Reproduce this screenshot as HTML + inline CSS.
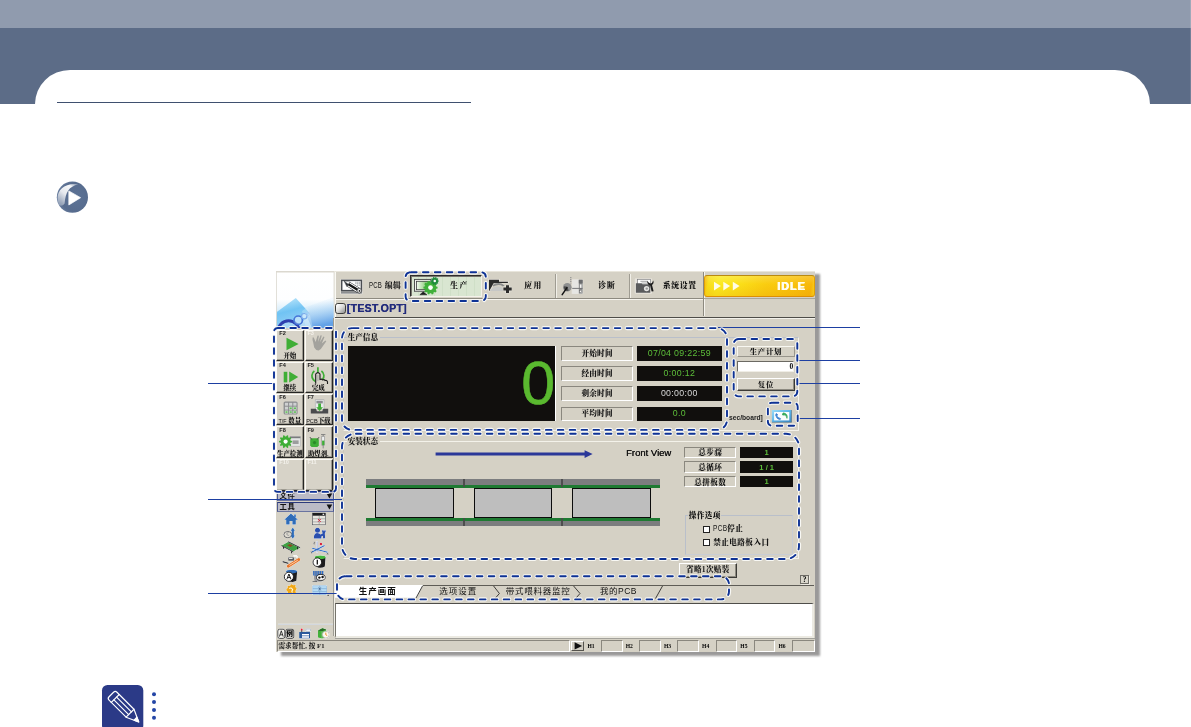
<!DOCTYPE html>
<html lang="zh"><head><meta charset="utf-8"><title>生产画面</title>
<style>
*{box-sizing:border-box;margin:0;padding:0}
html,body{width:1191px;height:727px;overflow:hidden;background:#fff}
body{position:relative;font-family:"Liberation Sans","Noto Sans CJK SC",sans-serif;color:#000}
.a{position:absolute}
.band1{left:0;top:0;width:1191px;height:28px;background:#909bae}
.band2{left:0;top:28px;width:1191px;height:75.5px;background:#5c6c87}
.panel{left:35px;top:70px;width:1115px;height:700px;background:#fff;border-radius:35px 35px 0 0/34px 34px 0 0}
.tline{left:57px;top:102px;width:414px;height:1.2px;background:#3f506f}
#app{left:276.2px;top:271.3px;width:539.2px;height:381px;background:#d5d1c5}
.cj,.a{will-change:auto}
.cj{font-family:"Liberation Serif","Noto Serif CJK SC",serif;font-weight:900;white-space:nowrap;color:#161616}
.lbl{font-size:8.5px;line-height:10px}
.sunk{border:1px solid;border-color:#8a877e #fff #fff #8a877e}
.raise{border:1px solid;border-color:#fff #55534d #55534d #fff}
.blk{background:#100e0c;color:#5dbe3a;text-align:center;font-size:9.5px;font-family:"Liberation Sans",sans-serif}
</style></head><body><div id="wrap" style="position:absolute;left:0;top:0;width:1191px;height:727px;will-change:transform">
<div class="a band1"></div><div class="a band2"></div><div class="a panel"></div><div class="a tline"></div><div class="a" style="left:1190px;top:0;width:1px;height:103.5px;background:rgba(255,255,255,.14)"></div>
<svg class="a" style="left:55px;top:180px" width="36" height="36" viewBox="0 0 36 36">
<defs>
<radialGradient id="pg1" cx="0.6" cy="0.5" r="0.62"><stop offset="0" stop-color="#5d7396"/><stop offset="0.75" stop-color="#576c8e"/><stop offset="1" stop-color="#6a7fa0"/></radialGradient>
<linearGradient id="pg2" x1="0.1" y1="1" x2="0.9" y2="0"><stop offset="0" stop-color="#fff" stop-opacity=".25"/><stop offset=".45" stop-color="#fff" stop-opacity=".85"/><stop offset=".8" stop-color="#fff" stop-opacity=".95"/><stop offset="1" stop-color="#fff" stop-opacity=".3"/></linearGradient>
<filter id="pb" x="-20%" y="-20%" width="140%" height="140%"><feGaussianBlur stdDeviation=".55"/></filter>
</defs>
<circle cx="17.4" cy="17.2" r="15.6" fill="url(#pg1)"/>
<path d="M3.6 24.2 C-0.4 12.6 7.6 2 23.4 4.2 C13.8 6.6 10.6 12 9.6 23.4 C7.8 26 4.8 26.4 3.6 24.2Z" fill="url(#pg2)" filter="url(#pb)"/>
<path d="M13.8 10.9 L25.6 17.7 L13.8 25 Z" fill="#fff" stroke="#fff" stroke-width=".7" stroke-linejoin="round"/>
</svg>

<div class="a" style="left:281px;top:274.4px;width:539.3px;height:381.6px;background:#9a9999;filter:blur(1.2px)"></div>
<div id="app" class="a"></div>
<svg class="a" style="left:276px;top:271px" width="58" height="57" viewBox="0 0 58 57">
<defs><linearGradient id="lg1" x1="0" y1="0" x2="0" y2="1"><stop offset="0" stop-color="#fff"/><stop offset=".5" stop-color="#fdfeff"/><stop offset=".72" stop-color="#d4ecfa"/><stop offset="1" stop-color="#a9d6f4"/></linearGradient>
<linearGradient id="lg2" x1="0" y1="0" x2=".3" y2="1"><stop offset="0" stop-color="#8fd6f8" stop-opacity=".55"/><stop offset=".5" stop-color="#5fbcf2" stop-opacity=".85"/><stop offset="1" stop-color="#8fcef6" stop-opacity=".8"/></linearGradient>
<linearGradient id="lg3" x1="0" y1="0" x2=".25" y2="1"><stop offset="0" stop-color="#9fcdf4" stop-opacity="0"/><stop offset=".3" stop-color="#9fcdf4" stop-opacity=".1"/><stop offset=".6" stop-color="#8fc0f0" stop-opacity=".5"/><stop offset="1" stop-color="#5f9fe6" stop-opacity=".95"/></linearGradient>
<clipPath id="lgc"><rect x=".8" y="1.6" width="56.8" height="55.4"/></clipPath></defs>
<rect width="58" height="57" fill="#dbd8cf"/>
<g clip-path="url(#lgc)">
<rect width="58" height="57" fill="url(#lg1)"/>
<path d="M27 37 L58 26 L58 57 L36 57Z" fill="url(#lg3)"/>
<path d="M0.8 41 L19.8 27 L33.4 42 L22 57 L0.8 57Z" fill="url(#lg2)"/>
<path d="M26 40 L32 36 L37 57 L30 57Z" fill="#dff2fc" opacity=".3"/>
<circle cx="12.6" cy="60.6" r="10.8" fill="#bfe0f6" fill-opacity=".45" stroke="#2d3fae" stroke-width="3"/>
<circle cx="22.2" cy="49.2" r="4.2" fill="#d8eefc" fill-opacity=".6" stroke="#4676d8" stroke-width="1.7"/>
<circle cx="28.2" cy="45.2" r="2.7" fill="#e4f4fe" fill-opacity=".6" stroke="#79aaea" stroke-width="1.2"/>
<circle cx="31.6" cy="43" r="1.8" fill="none" stroke="#a9ccf2" stroke-width=".9"/>
</g>
</svg>
<div class="a " style="left:334px;top:271px;width:481px;height:1px;background:#e9e6dc"></div>
<div class="a " style="left:333.6px;top:272px;width:1px;height:46px;background:#e6e4dc"></div>
<div class="a " style="left:334.6px;top:272px;width:1px;height:46px;background:#faf9f4"></div>
<div class="a " style="left:336px;top:297.6px;width:367px;height:1px;background:#8d8a80"></div>
<div class="a " style="left:336px;top:298.6px;width:367px;height:1px;background:#f6f4ee"></div>
<div class="a " style="left:555.3px;top:273.5px;width:1px;height:24px;background:#9f9c92"></div>
<div class="a " style="left:556.3px;top:273.5px;width:1px;height:24px;background:#f1efe8"></div>
<div class="a " style="left:629.2px;top:273.5px;width:1px;height:24px;background:#9f9c92"></div>
<div class="a " style="left:630.2px;top:273.5px;width:1px;height:24px;background:#f1efe8"></div>
<div class="a " style="left:702.6px;top:272px;width:1px;height:44px;background:#8d8a80"></div>
<div class="a " style="left:703.6px;top:272px;width:1px;height:44px;background:#f6f4ee"></div>
<div class="a " style="left:704px;top:298.2px;width:111px;height:1px;background:#a9a69b"></div>
<div class="a " style="left:410.3px;top:274.6px;width:71.6px;height:22.8px;background:repeating-linear-gradient(90deg,#d9e6d1 0,#d9e6d1 7px,#cfdfc7 7px,#cfdfc7 8px);border:1px solid;border-color:#2e2d2a #f4f2ea #f4f2ea #2e2d2a;box-shadow:inset 1px 1px 0 #77756d"></div>
<div class="a cj" style="left:368.6px;top:280.53px;font-size:7.8px;line-height:10.14px;letter-spacing:.3px"><span style="display:inline-block;font-family:'Liberation Sans',sans-serif;font-size:8.2px;font-weight:400;transform:scaleX(.74);transform-origin:0 50%;width:16.2px">PCB</span>编辑</div>
<div class="a cj" style="left:450.2px;top:280.53px;font-size:7.8px;line-height:10.14px;color:#111;letter-spacing:1.5px">生产</div>
<div class="a cj" style="left:524.3px;top:280.53px;font-size:7.8px;line-height:10.14px;color:#111;letter-spacing:1.3px">应用</div>
<div class="a cj" style="left:598.2px;top:280.53px;font-size:7.8px;line-height:10.14px;color:#111;letter-spacing:.9px">诊断</div>
<div class="a cj" style="left:662.7px;top:280.53px;font-size:7.8px;line-height:10.14px;color:#111;letter-spacing:.75px">系统设置</div>
<svg class="a" style="left:336px;top:273px" width="330" height="25" viewBox="336 273 330 25">
<!-- PCB edit -->
<rect x="340.3" y="279" width="22.4" height="15.2" rx=".8" fill="#ecebe6" opacity=".85"/>
<rect x="341.7" y="280.35" width="19.7" height="10.3" fill="#fff" stroke="#4a4d52" stroke-width="1.5"/>
<rect x="341" y="291.2" width="21.1" height="2.4" fill="#8c8e90"/>
<g fill="#a4a6a8"><rect x="355.2" y="281.7" width="1.4" height="1"/><rect x="357" y="281.7" width="1.4" height="1"/><rect x="358.8" y="281.7" width="1.4" height="1"/><rect x="355.2" y="283.2" width="1.4" height="1"/><rect x="357" y="283.2" width="1.4" height="1"/><rect x="358.8" y="283.2" width="1.4" height="1"/><rect x="357" y="284.7" width="1.4" height="1"/><rect x="358.8" y="284.7" width="1.4" height="1"/></g>
<path d="M344.1 281.1 L346.9 286.6 L348.5 284.2Z" fill="#33363a" stroke="#33363a" stroke-width=".5" stroke-linejoin="round"/>
<path d="M344.1 281.1 L350.1 281.9 L348.5 284.2Z" fill="#fff" stroke="#33363a" stroke-width=".4" stroke-linejoin="round"/>
<path d="M348.5 284.2 L358.8 290.6" stroke="#2a2c2f" stroke-width="5.4"/>
<path d="M348.8 284.4 L358.8 290.6" stroke="#fff" stroke-width="4.4"/>
<path d="M348.5 284.2 L358.8 290.6" stroke="#151515" stroke-width="2.4"/>
<circle cx="359.3" cy="290.8" r="2.3" fill="#fff" stroke="#2a2c2f" stroke-width=".7"/><circle cx="359.5" cy="290.9" r=".95" fill="#1c1c1c"/>
<!-- production: monitor + gears -->
<defs><linearGradient id="mg1" x1="0" y1="0" x2="1" y2="0"><stop offset="0" stop-color="#f4faf0"/><stop offset=".45" stop-color="#b9e0ac"/><stop offset="1" stop-color="#5fb84f"/></linearGradient></defs>
<rect x="414.5" y="279.4" width="16.4" height="12" fill="#f2f4ee" stroke="#3f4040" stroke-width=".9"/>
<rect x="416.4" y="281.3" width="13" height="8.4" fill="url(#mg1)" stroke="#3a3b3b" stroke-width=".8"/>
<path d="M414.4 291.2 H431" stroke="#8a8b8b" stroke-width=".9"/>
<path d="M419.8 294.8 L423.2 291.8 L426.9 294.8Z" fill="#1c1c1c" stroke="#1c1c1c" stroke-width=".5" stroke-linejoin="round"/>
<path d="M436.18 286.44 L437.54 286.71 L437.54 288.49 L436.18 288.76 L435.78 290.00 L436.72 291.02 L435.68 292.46 L434.42 291.88 L433.36 292.65 L433.52 294.02 L431.83 294.57 L431.15 293.36 L429.85 293.36 L429.17 294.57 L427.48 294.02 L427.64 292.65 L426.58 291.88 L425.32 292.46 L424.28 291.02 L425.22 290.00 L424.82 288.76 L423.46 288.49 L423.46 286.71 L424.82 286.44 L425.22 285.20 L424.28 284.18 L425.32 282.74 L426.58 283.32 L427.64 282.55 L427.48 281.18 L429.17 280.63 L429.85 281.84 L431.15 281.84 L431.83 280.63 L433.52 281.18 L433.36 282.55 L434.42 283.32 L435.68 282.74 L436.72 284.18 L435.78 285.20Z" fill="#40b03a"/><circle cx="430.5" cy="287.6" r="2.35" fill="#fff"/>
<path d="M437.98 280.39 L438.82 280.54 L438.82 281.56 L437.98 281.71 L437.75 282.42 L438.34 283.03 L437.74 283.86 L436.98 283.48 L436.38 283.92 L436.50 284.76 L435.52 285.08 L435.12 284.33 L434.38 284.33 L433.98 285.08 L433.00 284.76 L433.12 283.92 L432.52 283.48 L431.76 283.86 L431.16 283.03 L431.75 282.42 L431.52 281.71 L430.68 281.56 L430.68 280.54 L431.52 280.39 L431.75 279.68 L431.16 279.07 L431.76 278.24 L432.52 278.62 L433.12 278.18 L433.00 277.34 L433.98 277.02 L434.38 277.77 L435.12 277.77 L435.52 277.02 L436.50 277.34 L436.38 278.18 L436.98 278.62 L437.74 278.24 L438.34 279.07 L437.75 279.68Z" fill="#1f8c3c"/><circle cx="434.75" cy="281.05" r="1.25" fill="#fff"/>
<!-- apply: folder + plus -->
<path d="M488.4 279 H499.8 V281 H508.6 V283.6 H499 L494 284 L490 291.8 H488.4Z" fill="#eceae4" opacity=".8"/>
<path d="M489 279.7 H499 V281.7 H507.9 V282.9 H499 L493.6 283.2 L489.3 291 H489Z" fill="#2b2b2b"/>
<path d="M489.6 291 L493.2 287.6 Q497.4 285.4 502.2 287.4 L503 291Z" fill="#c6c7c6"/>
<path d="M492.6 285 Q499 280.8 504.6 285.4 L503 286.4 Q498.6 283.4 493.4 286.6Z" fill="#8a8c8c"/>
<path d="M507.5 285.2 V293.2 M503.3 289 H511.8" stroke="#eceae4" stroke-width="4.4" opacity=".8"/>
<path d="M507.5 285.3 V293.1 M503.4 289 H511.7" stroke="#2b2b2b" stroke-width="3"/>
<!-- diagnose -->
<rect x="571.6" y="279.2" width="11.6" height="14.8" fill="#eceae4" opacity=".7"/>
<rect x="572.2" y="279.8" width="10.4" height="13.8" fill="#e6e6e3"/>
<rect x="578.8" y="279.8" width="3.8" height="13.8" fill="#8a8b8c"/>
<rect x="578.8" y="279.8" width="3.8" height="3.6" fill="#6a6b6c"/>
<rect x="579.9" y="284.4" width="1.6" height="3.6" fill="#f4f4f2"/>
<rect x="579.7" y="290.2" width="2" height="2.4" fill="#f4f4f2" stroke="#5a5b5c" stroke-width=".4"/>
<path d="M572.2 288.4 H582.6" stroke="#6c6d6f" stroke-width=".9"/>
<path d="M570.8 277 V283.4" stroke="#8a8b8c" stroke-width="1.1" stroke-dasharray="1.2 .7"/>
<circle cx="567.3" cy="287.3" r="4.3" fill="#8e8f8f"/>
<path d="M564 286.2 A3.4 3.4 0 0 0 568.8 290.4 L567 286.8Z" fill="#4a4a4a"/>
<path d="M567 287.6 L562.2 294.6" stroke="#141414" stroke-width="1.5" stroke-linecap="round"/>
<!-- system settings -->
<rect x="634.8" y="278.2" width="17.2" height="15.6" rx="1" fill="#eceae4" opacity=".75"/>
<rect x="637.4" y="279.3" width="13.2" height="5.4" fill="#fff" stroke="#7a7b7d" stroke-width=".7"/>
<path d="M640.4 281.3 H647.6 M641.6 283.1 H647.6" stroke="#8a8b8d" stroke-width=".8"/>
<path d="M635.9 283.2 H641.6 L642.6 284.6 H650.3 V292.8 H635.9Z" fill="#5a5b5d"/>
<circle cx="646.6" cy="288.6" r="2.7" fill="#e4e4e2"/><circle cx="646.8" cy="288.6" r="1.2" fill="#9a9b9c"/>
<path d="M647.3 280.8 Q646.8 284.4 650.2 285.4 L651.6 291.6 L653.6 291.2 L652 285 Q654.4 283.4 653.2 280.6 L652 283 L650.4 283.4 L648.6 282.6Z" fill="#1c1c1c"/>
</svg>

<div class="a " style="left:704.3px;top:275.3px;width:110.3px;height:21.6px;border-radius:3px;border:1px solid;border-color:#b98a10 #e0a008 #dc8e06 #e0a008;background:linear-gradient(180deg,rgba(255,255,255,.18),rgba(255,255,255,0) 40%,rgba(215,120,0,.16)),linear-gradient(100deg,#f6b60c 0,#f9de1a 4%,#fbea20 13%,#fbdf18 32%,#facd10 55%,#f9c20c 80%,#f8b80a 96%,#fbd820 100%)"></div>
<svg class="a" style="left:712px;top:279px" width="32" height="14" viewBox="0 0 32 14"><g fill="#fffce6"><path d="M2 2.7 L8.8 7.1 L2 11.6Z"/><path d="M11.3 2.7 L18.1 7.1 L11.3 11.6Z"/><path d="M20.8 2.7 L27.6 7.1 L20.8 11.6Z"/></g></svg>
<div class="a " style="left:777.3px;top:279.61px;font-size:10.6px;line-height:13.78px;font-weight:700;color:#fffdf0;letter-spacing:1.1px;text-shadow:.5px 0 0 #fffdf0,-.3px 0 0 #fffdf0;font-family:'Liberation Sans',sans-serif">IDLE</div>
<div class="a " style="left:334.6px;top:303.3px;width:11px;height:10.3px;border-radius:2.8px;border:1px solid #3e3e3c;background:linear-gradient(135deg,#fff 8%,#dcdcda 50%,#8e8e8c)"></div>
<div class="a " style="left:346.7px;top:301.61px;font-size:10.6px;line-height:13.78px;font-weight:700;color:#232c7c;letter-spacing:.24px;text-shadow:.3px 0 0 #232c7c;font-family:'Liberation Sans',sans-serif">[TEST.OPT]</div>
<div class="a " style="left:335px;top:317.2px;width:480px;height:1px;background:#4e4d49"></div>
<div class="a " style="left:335px;top:318.2px;width:480px;height:1px;background:#f3f1ea"></div>
<div class="a " style="left:333.2px;top:318px;width:1.2px;height:318px;background:#9d9b92"></div>
<div class="a " style="left:334.4px;top:318px;width:1px;height:318px;background:#efede5"></div>
<div class="a" style="left:276.4px;top:329.6px;width:27.6px;height:31.4px;background:#d7d3c8;border-style:solid;border-width:1.2px 1.4px 1.4px 1.2px;border-color:#fdfcf8 #262624 #262624 #fdfcf8;box-shadow:inset -.8px -.8px 0 #8d8a80"></div>
<div class="a" style="left:279.29999999999995px;top:330.0px;font-size:5.6px;line-height:7px;font-weight:700;color:#222;font-family:'Liberation Sans',sans-serif">F2</div>
<div class="a cj" style="left:275.0px;top:351.1px;width:29.6px;text-align:center;font-size:6.4px;line-height:9px;color:#111">开始</div>
<div class="a" style="left:304.5px;top:329.6px;width:28.4px;height:31.4px;background:#d7d3c8;border-style:solid;border-width:1.2px 1.4px 1.4px 1.2px;border-color:#fdfcf8 #262624 #262624 #fdfcf8;box-shadow:inset -.8px -.8px 0 #8d8a80"></div>
<div class="a" style="left:307.4px;top:330.0px;font-size:5.6px;line-height:7px;font-weight:700;color:#f4f2ec;font-family:'Liberation Sans',sans-serif">F3</div>
<div class="a" style="left:276.4px;top:361.9px;width:27.6px;height:31.3px;background:#d7d3c8;border-style:solid;border-width:1.2px 1.4px 1.4px 1.2px;border-color:#fdfcf8 #262624 #262624 #fdfcf8;box-shadow:inset -.8px -.8px 0 #8d8a80"></div>
<div class="a" style="left:279.29999999999995px;top:362.29999999999995px;font-size:5.6px;line-height:7px;font-weight:700;color:#222;font-family:'Liberation Sans',sans-serif">F4</div>
<div class="a cj" style="left:275.0px;top:383.4px;width:29.6px;text-align:center;font-size:6.4px;line-height:9px;color:#111">继续</div>
<div class="a" style="left:304.5px;top:361.9px;width:28.4px;height:31.3px;background:#d7d3c8;border-style:solid;border-width:1.2px 1.4px 1.4px 1.2px;border-color:#fdfcf8 #262624 #262624 #fdfcf8;box-shadow:inset -.8px -.8px 0 #8d8a80"></div>
<div class="a" style="left:307.4px;top:362.29999999999995px;font-size:5.6px;line-height:7px;font-weight:700;color:#222;font-family:'Liberation Sans',sans-serif">F5</div>
<div class="a cj" style="left:303.1px;top:383.4px;width:30.4px;text-align:center;font-size:6.4px;line-height:9px;color:#111">完成</div>
<div class="a" style="left:276.4px;top:394px;width:27.6px;height:31.2px;background:#d7d3c8;border-style:solid;border-width:1.2px 1.4px 1.4px 1.2px;border-color:#fdfcf8 #262624 #262624 #fdfcf8;box-shadow:inset -.8px -.8px 0 #8d8a80"></div>
<div class="a" style="left:279.29999999999995px;top:394.4px;font-size:5.6px;line-height:7px;font-weight:700;color:#222;font-family:'Liberation Sans',sans-serif">F6</div>
<div class="a cj" style="left:275.0px;top:416.3px;width:29.6px;text-align:center;font-size:6.4px;line-height:9px;color:#111"><span style="font-family:'Liberation Sans',sans-serif;font-weight:400;font-size:5.4px">T/F</span> 数量</div>
<div class="a" style="left:304.5px;top:394px;width:28.4px;height:31.2px;background:#d7d3c8;border-style:solid;border-width:1.2px 1.4px 1.4px 1.2px;border-color:#fdfcf8 #262624 #262624 #fdfcf8;box-shadow:inset -.8px -.8px 0 #8d8a80"></div>
<div class="a" style="left:307.4px;top:394.4px;font-size:5.6px;line-height:7px;font-weight:700;color:#222;font-family:'Liberation Sans',sans-serif">F7</div>
<div class="a cj" style="left:303.1px;top:416.3px;width:30.4px;text-align:center;font-size:6.4px;line-height:9px;color:#111"><span style="font-family:'Liberation Sans',sans-serif;font-weight:400;font-size:5.6px">PCB</span>下载</div>
<div class="a" style="left:276.4px;top:426.4px;width:27.6px;height:31.4px;background:#d7d3c8;border-style:solid;border-width:1.2px 1.4px 1.4px 1.2px;border-color:#fdfcf8 #262624 #262624 #fdfcf8;box-shadow:inset -.8px -.8px 0 #8d8a80"></div>
<div class="a" style="left:279.29999999999995px;top:426.79999999999995px;font-size:5.6px;line-height:7px;font-weight:700;color:#222;font-family:'Liberation Sans',sans-serif">F8</div>
<div class="a cj" style="left:275.0px;top:449.29999999999995px;width:29.6px;text-align:center;font-size:6.4px;line-height:9px;color:#111">生产检测</div>
<div class="a" style="left:304.5px;top:426.4px;width:28.4px;height:31.4px;background:#d7d3c8;border-style:solid;border-width:1.2px 1.4px 1.4px 1.2px;border-color:#fdfcf8 #262624 #262624 #fdfcf8;box-shadow:inset -.8px -.8px 0 #8d8a80"></div>
<div class="a" style="left:307.4px;top:426.79999999999995px;font-size:5.6px;line-height:7px;font-weight:700;color:#222;font-family:'Liberation Sans',sans-serif">F9</div>
<div class="a cj" style="left:303.1px;top:449.29999999999995px;width:30.4px;text-align:center;font-size:6.4px;line-height:9px;color:#111">助焊剂.</div>
<div class="a" style="left:276.4px;top:458.8px;width:27.6px;height:31.8px;background:#d7d3c8;border-style:solid;border-width:1.2px 1.4px 1.4px 1.2px;border-color:#fdfcf8 #262624 #262624 #fdfcf8;box-shadow:inset -.8px -.8px 0 #8d8a80"></div>
<div class="a" style="left:279.29999999999995px;top:459.2px;font-size:5.6px;line-height:7px;font-weight:700;color:#f4f2ec;font-family:'Liberation Sans',sans-serif">F10</div>
<div class="a" style="left:304.5px;top:458.8px;width:28.4px;height:31.8px;background:#d7d3c8;border-style:solid;border-width:1.2px 1.4px 1.4px 1.2px;border-color:#fdfcf8 #262624 #262624 #fdfcf8;box-shadow:inset -.8px -.8px 0 #8d8a80"></div>
<div class="a" style="left:307.4px;top:459.2px;font-size:5.6px;line-height:7px;font-weight:700;color:#f4f2ec;font-family:'Liberation Sans',sans-serif">F11</div>
<svg class="a" style="left:274px;top:326px" width="64" height="170" viewBox="274 326 64 170">
<path d="M286.5 337.8 L298.6 344 L286.5 350.2Z" fill="#3fae36"/>
<g fill="#a3a29d"><path d="M313.2 342.5 Q312.2 339.5 312.6 337.6 L313.8 337.4 L315.6 342 L317.6 335.6 L318.9 335.8 L317.9 342 L320.6 335.2 L321.8 335.6 L320 342.3 L323.4 336.4 L324.5 337 L321.8 343.4 L325.4 340.4 L326.3 341.3 L322.6 346.4 Q321 349.6 318.6 350.4 Q315.4 350.2 314.2 347.6Z"/></g>
<rect x="283.7" y="371.8" width="3.6" height="10.6" fill="#3fae36"/><path d="M289.2 371.6 L298.2 377.1 L289.2 382.6Z" fill="#3fae36"/>
<path d="M314.4 371 A6 6 0 1 0 321.4 371" fill="none" stroke="#3fae36" stroke-width="1.7"/><path d="M317.9 367.2 V373.4" stroke="#3fae36" stroke-width="1.7"/>
<path d="M315.7 383.8 V374 Q317.9 371.2 320 374 V379.6 Q321.6 378.6 322.6 380 Q324.2 379 325 380.6 Q326.8 380 327.5 381.6 V384" fill="#d7d3c8" stroke="#1c1c1c" stroke-width="1.1" stroke-linejoin="round"/><path d="M317.9 375 V381" stroke="#8d8e90" stroke-width=".6"/>
<rect x="283.6" y="401.4" width="14" height="13.2" rx="1.6" fill="#8b8d8f"/>
<rect x="284.9" y="402.8" width="3.2" height="2.9" fill="#cfd1d2"/>
<rect x="284.9" y="406.7" width="3.2" height="2.9" fill="#cfd1d2"/>
<rect x="284.9" y="410.6" width="3.2" height="2.9" fill="#dfe8dc"/>
<rect x="285.4" y="411.4" width="2.2" height="1.3" fill="#43b53a"/>
<rect x="289.1" y="402.8" width="3.2" height="2.9" fill="#cfd1d2"/>
<rect x="289.1" y="406.7" width="3.2" height="2.9" fill="#dfe8dc"/>
<rect x="289.6" y="407.5" width="2.2" height="1.3" fill="#43b53a"/>
<rect x="289.1" y="410.6" width="3.2" height="2.9" fill="#dfe8dc"/>
<rect x="289.6" y="411.4" width="2.2" height="1.3" fill="#43b53a"/>
<rect x="293.3" y="402.8" width="3.2" height="2.9" fill="#cfd1d2"/>
<rect x="293.3" y="406.7" width="3.2" height="2.9" fill="#dfe8dc"/>
<rect x="293.8" y="407.5" width="2.2" height="1.3" fill="#43b53a"/>
<rect x="293.3" y="410.6" width="3.2" height="2.9" fill="#dfe8dc"/>
<rect x="293.8" y="411.4" width="2.2" height="1.3" fill="#43b53a"/>
<rect x="315.2" y="399.8" width="8.8" height="9.6" fill="#e9ebec" stroke="#9a9c9e" stroke-width=".5"/><rect x="316.4" y="400.8" width="6.4" height="2.6" fill="#8b8d8f"/>
<path d="M310.8 408.8 H315.8 L317 411.2 H322.2 L323.4 408.8 H328.2 V413.6 H310.8Z" fill="#4a4b4d"/>
<path d="M318.2 403.6 H321 V407.2 H323 L319.6 411 L316.2 407.2 H318.2Z" fill="#3fae36"/>
<rect x="290" y="436.6" width="10.4" height="9.6" fill="#e4e5e4" stroke="#a9aaab" stroke-width=".5"/><rect x="290" y="436.6" width="10.4" height="1.6" fill="#7b7c7e"/><rect x="292.6" y="440.4" width="6" height="3.6" fill="#9c9d9e"/>
<path d="M292.17 441.01 L292.17 442.19 L290.47 442.71 L290.20 443.57 L291.27 444.98 L290.57 445.94 L288.89 445.36 L288.16 445.89 L288.20 447.67 L287.07 448.03 L286.05 446.58 L285.15 446.58 L284.13 448.03 L283.00 447.67 L283.04 445.89 L282.31 445.36 L280.63 445.94 L279.93 444.98 L281.00 443.57 L280.73 442.71 L279.03 442.19 L279.03 441.01 L280.73 440.49 L281.00 439.63 L279.93 438.22 L280.63 437.26 L282.31 437.84 L283.04 437.31 L283.00 435.53 L284.13 435.17 L285.15 436.62 L286.05 436.62 L287.07 435.17 L288.20 435.53 L288.16 437.31 L288.89 437.84 L290.57 437.26 L291.27 438.22 L290.20 439.63 L290.47 440.49Z" fill="#3fae36"/><circle cx="285.6" cy="441.6" r="2.1" fill="#fff"/>
<path d="M311.2 438.2 H317.8 L318.8 439.4 V445.6 L317.4 447 H311.6 L310.2 445.6 V439.4Z" fill="#3fae36"/><path d="M310 437.2 L311.8 439.6 M319 437.2 L317.2 439.6" stroke="#4a4b4d" stroke-width="1"/><circle cx="314.5" cy="442.6" r="1.6" fill="#2c8a28"/>
<path d="M321 434.6 H325.4 M323.2 434.6 V436.4" stroke="#6c6d6f" stroke-width=".8"/><rect x="321.8" y="436.4" width="2.9" height="9" fill="#eef0f0" stroke="#7b7c7e" stroke-width=".5"/><rect x="322.1" y="440.6" width="2.3" height="4.6" fill="#3fae36"/><path d="M323.2 445.4 V448.4" stroke="#6c6d6f" stroke-width=".7"/>
</svg>
<div class="a " style="left:343px;top:337.2px;width:456px;height:93.4px;border:1px solid #b9bfca;border-right-color:#f4f2ea;border-bottom-color:#f4f2ea;border-left-color:#c9c6bb"></div>
<div class="a " style="left:346.5px;top:332px;width:33.5px;height:10px;background:#d5d1c5"></div>
<div class="a cj" style="left:347.7px;top:333.06px;font-size:7.6px;line-height:9.88px;">生产信息</div>
<div class="a " style="left:348.4px;top:346.2px;width:206.8px;height:74.8px;background:#110f0d"></div>
<div class="a " style="left:555.2px;top:346.2px;width:1px;height:74.8px;background:#fff"></div>
<div class="a" style="left:500px;top:347.9px;width:55.1px;text-align:right;font-size:61px;line-height:70px;color:#5ab92f;-webkit-text-stroke:.55px #5ab92f;font-family:'Liberation Sans',sans-serif">0</div>
<div class="a sunk" style="left:561px;top:346.3px;width:72.2px;height:14.5px;"></div>
<div class="a cj" style="left:561px;top:348.81px;width:72.2px;text-align:center;font-size:7.6px;line-height:9.88px;letter-spacing:.2px">开始时间</div>
<div class="a " style="left:637px;top:346.3px;width:84.6px;height:14.5px;background:#110f0d"></div>
<div class="a " style="left:637px;top:348.13px;width:84.6px;text-align:center;font-size:8.8px;line-height:11.44px;color:#5dbe3a;letter-spacing:.32px;font-family:'Liberation Sans',sans-serif">07/04 09:22:59</div>
<div class="a sunk" style="left:561px;top:365.6px;width:72.2px;height:15.6px;"></div>
<div class="a cj" style="left:561px;top:368.66px;width:72.2px;text-align:center;font-size:7.6px;line-height:9.88px;letter-spacing:.2px">经由时间</div>
<div class="a " style="left:637px;top:365.6px;width:84.6px;height:15.6px;background:#110f0d"></div>
<div class="a " style="left:637px;top:367.98px;width:84.6px;text-align:center;font-size:8.8px;line-height:11.44px;color:#5dbe3a;letter-spacing:.32px;font-family:'Liberation Sans',sans-serif">0:00:12</div>
<div class="a sunk" style="left:561px;top:386.3px;width:72.2px;height:15.2px;"></div>
<div class="a cj" style="left:561px;top:389.16px;width:72.2px;text-align:center;font-size:7.6px;line-height:9.88px;letter-spacing:.2px">剩余时间</div>
<div class="a " style="left:637px;top:386.3px;width:84.6px;height:15.2px;background:#110f0d"></div>
<div class="a " style="left:637px;top:388.48px;width:84.6px;text-align:center;font-size:8.8px;line-height:11.44px;color:#d8d8d8;letter-spacing:.32px;font-family:'Liberation Sans',sans-serif">00:00:00</div>
<div class="a sunk" style="left:561px;top:406.6px;width:72.2px;height:14.4px;"></div>
<div class="a cj" style="left:561px;top:409.06px;width:72.2px;text-align:center;font-size:7.6px;line-height:9.88px;letter-spacing:.2px">平均时间</div>
<div class="a " style="left:637px;top:406.6px;width:84.6px;height:14.4px;background:#110f0d"></div>
<div class="a " style="left:637px;top:408.38px;width:84.6px;text-align:center;font-size:8.8px;line-height:11.44px;color:#5dbe3a;letter-spacing:.32px;font-family:'Liberation Sans',sans-serif">0.0</div>
<div class="a " style="left:737.3px;top:346.4px;width:57.3px;height:10.5px;border:1px solid;border-color:#f8f7f1 #99968d #99968d #f8f7f1"></div>
<div class="a cj" style="left:737.3px;top:346.99px;width:57.3px;text-align:center;font-size:7.4px;line-height:9.62px;letter-spacing:.7px;color:#1a1a1a">生产计划</div>
<div class="a " style="left:737.4px;top:361.4px;width:57px;height:10.4px;background:#fff;border:1px solid;border-color:#6b6962 #f0eee6 #f0eee6 #6b6962"></div>
<div class="a " style="left:789.4px;top:361.79px;font-size:7.4px;line-height:9.62px;font-family:'Liberation Serif',serif;font-weight:700">0</div>
<div class="a " style="left:737.3px;top:377.6px;width:57.3px;height:13.2px;border:1px solid;border-color:#fff #3b3a36 #3b3a36 #fff;box-shadow:inset -1px -1px 0 #8d8a80"></div>
<div class="a cj" style="left:737.3px;top:379.79px;width:57.3px;text-align:center;font-size:7.4px;line-height:9.62px;letter-spacing:.8px;color:#1a1a1a">复位</div>
<div class="a " style="left:729px;top:414.145px;font-size:6.7px;line-height:8.71px;font-family:'Liberation Sans',sans-serif;font-weight:700;color:#222">sec/board]</div>
<svg class="a" style="left:770px;top:408px" width="24" height="16" viewBox="770 408 24 16">
<defs><linearGradient id="sw1" x1="0" y1="0" x2="1" y2="1"><stop offset="0" stop-color="#9adcf8"/><stop offset=".5" stop-color="#5ab4ea"/><stop offset="1" stop-color="#3a88c4"/></linearGradient></defs>
<rect x="771.9" y="410" width="19.6" height="12.3" fill="url(#sw1)"/>
<path d="M771.9 422.3 H791.5 V410" fill="none" stroke="#3a4a5a" stroke-width=".6" opacity=".7"/>
<rect x="774.1" y="412" width="15.2" height="8.4" fill="#fbfdfe"/>
<path d="M776.2 414.2 Q776.6 417.6 780.6 418.6 L780.2 419.6 Q775.4 418.8 776.2 414.2Z M775.6 415.4 L776.4 413.4 L777.8 415Z" fill="#3a7fd0" stroke="#3a7fd0" stroke-width=".7" stroke-linejoin="round"/>
<path d="M787 418.4 Q786.8 414.6 782.8 414 L783.4 413 Q788.2 413.6 787 418.4Z M782 414.6 L784 412.8 L784.2 415.2Z" fill="#35a85a" stroke="#35a85a" stroke-width=".7" stroke-linejoin="round"/>
</svg>

<div class="a " style="left:343px;top:441px;width:456px;height:118px;border:1px solid #c9c6bb;border-right-color:#f4f2ea;border-bottom-color:#f4f2ea;border-top-color:#f4f2ea"></div>
<div class="a " style="left:346.5px;top:436px;width:33.5px;height:10px;background:#d5d1c5"></div>
<div class="a cj" style="left:347.7px;top:436.86px;font-size:7.6px;line-height:9.88px;">安装状态</div>
<svg class="a" style="left:434px;top:448px" width="160" height="12" viewBox="0 0 160 12"><path d="M1.6 4.5 L150.6 4.6 L150.6 2.2 L158.6 6 L150.6 9.9 L150.6 7.5 L1.6 7.6Z" fill="#2b3899"/></svg>
<div class="a " style="left:626px;top:447.225px;font-size:9.5px;line-height:12.35px;font-family:'Liberation Sans',sans-serif;color:#111;text-shadow:.2px 0 0 #111">Front View</div>
<div class="a " style="left:365.6px;top:479.4px;width:294.8px;height:5.8px;background:#7c7d7f"></div>
<div class="a " style="left:365.6px;top:485.2px;width:294.8px;height:2.4px;background:#1e7a32"></div>
<div class="a " style="left:365.6px;top:518.1px;width:294.8px;height:2.5px;background:#1e7a32"></div>
<div class="a " style="left:365.6px;top:520.6px;width:294.8px;height:5.7px;background:#7c7d7f"></div>
<div class="a " style="left:463.1px;top:479.4px;width:1.6px;height:8px;background:#484949;opacity:.9"></div>
<div class="a " style="left:463.1px;top:518.3px;width:1.6px;height:8px;background:#484949;opacity:.9"></div>
<div class="a " style="left:561.3px;top:479.4px;width:1.6px;height:8px;background:#484949;opacity:.9"></div>
<div class="a " style="left:561.3px;top:518.3px;width:1.6px;height:8px;background:#484949;opacity:.9"></div>
<div class="a " style="left:375.3px;top:487.5px;width:78.7px;height:30.7px;background:#bebebe;border:1.2px solid #0c0c0c"></div>
<div class="a " style="left:474.1px;top:487.5px;width:78.4px;height:30.7px;background:#bebebe;border:1.2px solid #0c0c0c"></div>
<div class="a " style="left:572.3px;top:487.5px;width:78.7px;height:30.7px;background:#bebebe;border:1.2px solid #0c0c0c"></div>
<div class="a sunk" style="left:684.3px;top:446.6px;width:51.8px;height:11.4px;"></div>
<div class="a cj" style="left:684.3px;top:448.06px;width:51.8px;text-align:center;font-size:7.6px;line-height:9.88px;letter-spacing:.4px">总步骤</div>
<div class="a " style="left:740px;top:446.6px;width:53.4px;height:11.4px;background:#110f0d"></div>
<div class="a " style="left:740px;top:447.66px;width:53.4px;text-align:center;font-size:7.6px;line-height:9.88px;color:#5dbe3a;font-weight:700;font-family:'Liberation Sans',sans-serif">1</div>
<div class="a sunk" style="left:684.3px;top:461.4px;width:51.8px;height:11.5px;"></div>
<div class="a cj" style="left:684.3px;top:462.91px;width:51.8px;text-align:center;font-size:7.6px;line-height:9.88px;letter-spacing:.4px">总循环</div>
<div class="a " style="left:740px;top:461.4px;width:53.4px;height:11.5px;background:#110f0d"></div>
<div class="a " style="left:740px;top:462.51px;width:53.4px;text-align:center;font-size:7.6px;line-height:9.88px;color:#5dbe3a;font-weight:700;font-family:'Liberation Sans',sans-serif">1 / 1</div>
<div class="a sunk" style="left:684.3px;top:476.2px;width:51.8px;height:11.2px;"></div>
<div class="a cj" style="left:684.3px;top:477.56px;width:51.8px;text-align:center;font-size:7.6px;line-height:9.88px;letter-spacing:.4px">总拼板数</div>
<div class="a " style="left:740px;top:476.2px;width:53.4px;height:11.2px;background:#110f0d"></div>
<div class="a " style="left:740px;top:477.16px;width:53.4px;text-align:center;font-size:7.6px;line-height:9.88px;color:#5dbe3a;font-weight:700;font-family:'Liberation Sans',sans-serif">1</div>
<div class="a " style="left:684.5px;top:515.2px;width:108.8px;height:39.6px;border:1px solid #b9bfca;border-right-color:#c9cdd4;border-bottom-color:#c9cdd4"></div>
<div class="a " style="left:688px;top:510px;width:33px;height:10px;background:#d5d1c5"></div>
<div class="a cj" style="left:688.8px;top:511.06px;font-size:7.6px;line-height:9.88px;letter-spacing:.4px">操作选项</div>
<div class="a " style="left:703px;top:526px;width:6.8px;height:6.8px;background:#fff;border:1px solid #222"></div>
<div class="a cj" style="left:713.2px;top:524.46px;font-size:7.6px;line-height:9.88px;letter-spacing:.45px"><span style="display:inline-block;font-family:'Liberation Sans',sans-serif;font-size:8.2px;font-weight:400;transform:scaleX(.8);transform-origin:0 50%;width:14px">PCB</span>停止</div>
<div class="a " style="left:703px;top:539.4px;width:6.8px;height:6.8px;background:#fff;border:1px solid #222"></div>
<div class="a cj" style="left:713.2px;top:537.86px;font-size:7.6px;line-height:9.88px;letter-spacing:.45px">禁止电路板入口</div>
<div class="a " style="left:678.8px;top:562.8px;width:58px;height:14.8px;border:1px solid;border-color:#fff #3b3a36 #3b3a36 #fff;box-shadow:inset -1px -1px 0 #8d8a80"></div>
<div class="a cj" style="left:678.8px;top:565.06px;width:58px;text-align:center;font-size:7.6px;line-height:9.88px;letter-spacing:.3px">省略1次贴装</div>
<div class="a " style="left:799.6px;top:575.3px;width:9px;height:8.5px;border:1px solid #6e6c66;box-shadow:.8px .8px 0 #f4f2ea;background:#d9d6cb"></div>
<div class="a " style="left:799.8px;top:575.39px;width:9.4px;text-align:center;font-size:7.4px;line-height:9.62px;font-weight:700;font-family:'Liberation Serif',serif">?</div>
<div class="a " style="left:422px;top:585px;width:392px;height:1px;background:#5e5c56"></div>
<svg class="a" style="left:335px;top:585px" width="480" height="17" viewBox="0 0 480 17"><path d="M0 0 L88 0 L81.5 12.8 L0 12.8Z" fill="#fff"/><g fill="none" stroke="#2e2d2a" stroke-width=".9"><path d="M87.5 1 L81 13"/><path d="M158.6 1 L164.4 8.5 L160 13.5"/><path d="M238.6 1 L245 8.5 L240.6 13.5"/><path d="M327.5 1 L320.5 13.5"/></g></svg>
<div class="a cj" style="left:358.8px;top:586.375px;font-size:8.5px;line-height:11.05px;font-family:'Liberation Sans','Noto Sans CJK SC',sans-serif;font-weight:700;letter-spacing:1px;color:#111">生产画面</div>
<div class="a cj" style="left:439.3px;top:586.375px;font-size:8.5px;line-height:11.05px;font-family:'Liberation Sans','Noto Sans CJK SC',sans-serif;font-weight:400;letter-spacing:1px;color:#111">选项设置</div>
<div class="a cj" style="left:505.8px;top:586.375px;font-size:8.5px;line-height:11.05px;font-family:'Liberation Sans','Noto Sans CJK SC',sans-serif;font-weight:400;letter-spacing:.75px;color:#111">带式喂料器监控</div>
<div class="a cj" style="left:600px;top:586.375px;font-size:8.5px;line-height:11.05px;font-family:'Liberation Sans','Noto Sans CJK SC',sans-serif;font-weight:400;letter-spacing:.5px;color:#111">我的PCB</div>
<div class="a " style="left:334.6px;top:603px;width:479.4px;height:35px;background:#fff;border-style:solid;border-width:1px 2.4px 2.6px 1px;border-color:#4e4d49 #eceae2 #eceae2 #77756d"></div>
<div class="a " style="left:335.4px;top:638px;width:479.6px;height:0.9px;background:#a3a29b"></div>
<div class="a sunk" style="left:277px;top:640.2px;width:292.6px;height:11.8px;"></div>
<div class="a cj" style="left:278.4px;top:641.71px;font-size:6.6px;line-height:8.58px;letter-spacing:.1px">需求帮忙, 按 <span style="font-family:'Liberation Serif',serif">F1</span></div>
<div class="a " style="left:571.4px;top:641px;width:12.2px;height:10.4px;border:1px solid;border-color:#fff #55534d #55534d #fff;background:#cfcbc0"></div>
<svg class="a" style="left:573.6px;top:642.2px" width="9" height="8" viewBox="0 0 9 8"><path d="M.6 .3 L8.2 3.9 L.6 7.5Z" fill="#111"/></svg>
<div class="a " style="left:587.5px;top:642.56px;font-size:5.6px;line-height:7.28px;font-family:'Liberation Serif',serif;font-weight:700">H1</div>
<div class="a sunk" style="left:601.2px;top:640.2px;width:21.6px;height:11.8px;"></div>
<div class="a " style="left:625.7px;top:642.56px;font-size:5.6px;line-height:7.28px;font-family:'Liberation Serif',serif;font-weight:700">H2</div>
<div class="a sunk" style="left:639.3px;top:640.2px;width:21.6px;height:11.8px;"></div>
<div class="a " style="left:663.9px;top:642.56px;font-size:5.6px;line-height:7.28px;font-family:'Liberation Serif',serif;font-weight:700">H3</div>
<div class="a sunk" style="left:677.4px;top:640.2px;width:21.6px;height:11.8px;"></div>
<div class="a " style="left:702.1px;top:642.56px;font-size:5.6px;line-height:7.28px;font-family:'Liberation Serif',serif;font-weight:700">H4</div>
<div class="a sunk" style="left:715.5px;top:640.2px;width:21.6px;height:11.8px;"></div>
<div class="a " style="left:740.3px;top:642.56px;font-size:5.6px;line-height:7.28px;font-family:'Liberation Serif',serif;font-weight:700">H5</div>
<div class="a sunk" style="left:753.6px;top:640.2px;width:21.6px;height:11.8px;"></div>
<div class="a " style="left:778.5px;top:642.56px;font-size:5.6px;line-height:7.28px;font-family:'Liberation Serif',serif;font-weight:700">H6</div>
<div class="a sunk" style="left:791.7px;top:640.2px;width:23.2px;height:11.8px;"></div>
<div class="a" style="left:277.4px;top:491.4px;width:56.2px;height:9.2px;background:#bbbbc6;border:1px solid #4c5890;border-top-color:#2c3a7c;border-bottom-color:#6a74a0"></div>
<div class="a" style="left:279.6px;top:491.0px;font-size:7.3px;line-height:10px;letter-spacing:.7px;color:#111;font-weight:700;font-family:'Liberation Sans','Noto Sans CJK SC',sans-serif">文件</div>
<svg class="a" style="left:326px;top:493.4px" width="7" height="6" viewBox="0 0 7 6"><path d="M.6 .6 H6.2 L3.4 5.4Z" fill="#111"/></svg>
<div class="a" style="left:277.4px;top:502px;width:56.2px;height:9.6px;background:#bbbbc6;border:1px solid #4c5890;border-top-color:#2c3a7c;border-bottom-color:#6a74a0"></div>
<div class="a" style="left:279.6px;top:501.8px;font-size:7.3px;line-height:10px;letter-spacing:.7px;color:#111;font-weight:700;font-family:'Liberation Sans','Noto Sans CJK SC',sans-serif">工具</div>
<svg class="a" style="left:326px;top:504.2px" width="7" height="6" viewBox="0 0 7 6"><path d="M.6 .6 H6.2 L3.4 5.4Z" fill="#111"/></svg>
<svg class="a" style="left:276px;top:512px;filter:drop-shadow(0 0 .5px #fff) drop-shadow(0 0 .5px #fff)" width="58" height="130" viewBox="276 512 58 130">
<path d="M290.9 513.6 L298 519.8 H295.8 V524.6 H292.4 V521 H289.6 V524.6 H286.2 V519.8 H284.2Z" fill="#2f6cb8"/><rect x="294.2" y="514.4" width="1.6" height="3" fill="#2f6cb8"/>
<rect x="312.6" y="513" width="12.8" height="11.8" fill="#e9e7e0" stroke="#55565a" stroke-width=".7"/><rect x="312.6" y="513" width="12.8" height="2.7" fill="#1c1c1e"/><rect x="322.6" y="513.7" width="1.6" height="1.2" fill="#fff"/><path d="M312.6 518.8 H325.4 M312.6 521.9 H325.4 M319.2 515.7 V524.8" stroke="#77787c" stroke-width=".5"/><path d="M318 519 L320.8 521.8 M320.8 519 L318 521.8" stroke="#d8203a" stroke-width=".9"/>
<ellipse cx="287.8" cy="534.6" rx="4" ry="3.2" fill="#dedbd2" stroke="#3a3b3d" stroke-width=".7"/><path d="M288.6 532.6 A1.4 1.4 0 1 0 289.2 535" fill="none" stroke="#6c6d6f" stroke-width=".6"/><path d="M292.8 527.6 L295 530.8 H293.9 V535.6 H295 L292.8 538.7 L290.6 535.6 H291.7 V530.8 H290.6Z" fill="#2f6cb8"/>
<circle cx="317.5" cy="530.2" r="2.5" fill="#2a4fae"/><path d="M313.9 538.6 Q313.4 533.4 317 532.9 Q319.6 532.9 320.6 534.4 L322.6 533.6 L322 531 L323 529.6 L324 531.6 L325 529.6 L325.8 531.2 L324.8 533.6 L325.2 538.2 L323.2 538.4 L322.8 535.8 L321.4 536.4 V538.6Z" fill="#2a4fae"/>
<path d="M281.8 545.4 L288 542.1 L299.6 548 L293.6 551.2Z" fill="#3fa044"/><path d="M287.2 545.2 L289.8 543.9 L293 545.5 L290.4 546.9Z" fill="#8c4a22"/><path d="M281.4 545.6 L293.4 551.8 M288.2 541.7 L300.2 547.7" stroke="#1c1c1e" stroke-width=".9"/><path d="M283.6 547 V548.8 M291.6 551.2 V553.4 M297.6 547.2 V549.4" stroke="#1c1c1e" stroke-width="1"/>
<path d="M317.1 541.2 V552.4" stroke="#a9b4d4" stroke-width="1.2"/><path d="M312.2 548.3 L327.6 552.3 M311.6 552.3 L324.6 545.5" stroke="#2f6cc4" stroke-width="1.1" fill="none"/><circle cx="320.9" cy="544.1" r="1.25" fill="#d8203a"/><path d="M313.6 542.2 h1.4 l-1.4 1.8 h1.4 M310.8 551.4 l.8 1 l.8 -1 m-.8 1 v1.2 M326.8 552.8 l1.6 2 m0 -2 l-1.6 2" stroke="#111" stroke-width=".45" fill="none"/>
<path d="M282.6 561.6 L288.4 563.4" stroke="#3a3b3d" stroke-width="1.1"/><rect x="288.2" y="557.2" width="5.8" height="3.6" rx=".6" fill="#5a5b5f"/><rect x="289" y="557.8" width="3.6" height="1.2" fill="#e4e4e2"/><path d="M293.6 556 Q296.4 555 297.2 557.4" stroke="#f4f4f2" stroke-width="1.1" fill="none"/><path d="M288.2 566.2 L298.8 559.6" stroke="#e8742a" stroke-width="3" stroke-linecap="round"/><path d="M289.4 565.4 L297.8 560.2" stroke="#ffe4c4" stroke-width=".8"/>
<path d="M315 557.4 H325.5 L324.8 566.6 Q321.6 568.6 317.6 567.4Z" fill="#1c1c1e"/><ellipse cx="320.2" cy="557.3" rx="5.5" ry="1.8" fill="#43b83c"/><circle cx="317.3" cy="562.2" r="4.3" fill="#fff" stroke="#111" stroke-width=".9"/><path d="M317.3 559.8 V564.6" stroke="#111" stroke-width="1.3"/>
<path d="M287 571.6 H297.1 L296.4 580.8 Q293.4 582.6 290 581.6Z" fill="#1c1c1e"/><ellipse cx="291.6" cy="571.5" rx="5.6" ry="1.7" fill="#2f6cb8"/><circle cx="288.9" cy="576.8" r="4.6" fill="#fff" stroke="#111" stroke-width=".9"/><path d="M286.8 579.4 L288.9 574 L291 579.4 M287.6 577.6 H290.2" stroke="#111" stroke-width=".95" fill="none"/>
<path d="M313 571 H323.6 L323 581 Q319.6 582.6 314.4 581.2Z" fill="#9a9ca0"/><path d="M313.8 571 V575.6 M316 571 V576 M318.2 571 V576 M320.4 571 V576 M322.6 571 V575.6" stroke="#2f6cc4" stroke-width="1.3"/><path d="M312.4 581.6 H317" stroke="#4a4b4d" stroke-width=".8"/><ellipse cx="320.9" cy="577.4" rx="4.4" ry="3" fill="#fff" stroke="#111" stroke-width=".8"/><circle cx="319.4" cy="577.6" r="1.2" fill="#111"/><circle cx="322.6" cy="577" r="1.2" fill="#111"/>
<path d="M291.6 584 Q293 586 295.8 584.8 Q294.6 587.4 297 588.8 Q294.8 590.4 296 593 Q293.2 592.4 292 595 Q290.4 592.8 287.6 594 Q288.4 591.2 285.8 590 Q288.4 588.4 287.4 585.8 Q290.2 586.4 291.6 584Z" fill="#f0a818"/><path d="M289.2 588.4 Q291.4 587.2 292.6 589.6 Q291.2 591.2 292.4 592.6" stroke="#fff8e0" stroke-width="1.1" fill="none"/>
<rect x="312.8" y="585.8" width="13.8" height="8.8" fill="#b4daf4" stroke="#7aa6d0" stroke-width=".5"/><path d="M319.7 585.8 V594.6 M312.8 588.6 H326.6 M312.8 591.6 H326.6" stroke="#6f9cc8" stroke-width=".5"/><path d="M318.6 587.4 L320.8 590.4 M320.8 587.4 L318.6 590.4" stroke="#35507f" stroke-width=".6"/><path d="M327 596 l1.6 0 l0 -1.6Z" fill="#111"/>
<path d="M278 624.4 H333" stroke="#c2c8d2" stroke-width=".8"/>
<rect x="277.8" y="629.2" width="7" height="9.2" rx="1.8" fill="#f4f3ee" stroke="#222" stroke-width=".8"/><path d="M279.4 636.6 L281.3 630.8 L283.2 636.6 M280.1 634.8 H282.5" stroke="#111" stroke-width=".8" fill="none"/><rect x="285.8" y="629.2" width="8" height="9.2" rx="1.8" fill="#dcdbd6" stroke="#222" stroke-width=".8"/>
<rect x="299.2" y="632" width="10.8" height="6.3" fill="#2a5a9c"/><rect x="302" y="634" width="7" height="1.5" fill="#fff"/><rect x="302" y="636.2" width="7" height="1.6" fill="#fff"/><path d="M301.8 630 V632" stroke="#111" stroke-width=".9"/><circle cx="301.7" cy="629.4" r="1" fill="#e0203a"/><rect x="305.9" y="629" width="4.7" height="2.8" fill="#eef2f6" stroke="#6c7f9a" stroke-width=".4"/>
<path d="M318 630.4 L322.4 628.2 L326.2 629.6 V637.2 L322 638.6 L318 637.4Z" fill="#43b03a"/><path d="M318 630.4 L322.4 628.2 L326.2 629.6 L322 631.2Z" fill="#2a6a2a"/><path d="M322 631.2 V638.6" stroke="#8fd088" stroke-width=".7"/><circle cx="325.8" cy="634.6" r="3.4" fill="#fdfaf0" stroke="#b4b4b0" stroke-width=".7"/><path d="M325.8 632.6 V634.8 L327.2 635.6" stroke="#e8861a" stroke-width=".9" fill="none"/>
</svg>
<div class="a" style="left:286.5px;top:629.6px;font-size:6.4px;line-height:8.4px;color:#000;font-weight:900;font-family:'Liberation Sans','Noto Sans CJK SC',sans-serif">例</div>
<svg class="a" style="left:0;top:0" width="1191" height="727" viewBox="0 0 1191 727">
<g fill="none" stroke="#1d3fa2" stroke-width="1">
<path d="M208 383.5 H273.4"/><path d="M208 499.5 H342"/><path d="M208 593.5 H336.6"/>
<path d="M718 327.5 H860"/><path d="M797.5 360.5 H860"/><path d="M797 383.5 H860"/><path d="M798 418.5 H860"/>
</g>
<g id="dsh" fill="none" stroke-linecap="butt">
<g stroke="#fbfbf8" stroke-width="4.2" stroke-linecap="round" stroke-dasharray="5.2 6.7" stroke-dashoffset="-1.15" opacity=".93">
<rect x="274" y="328" width="62" height="163.9" rx="3.5"/>
<rect x="342" y="328.1" width="385" height="101.8" rx="10"/>
<rect x="342" y="433.8" width="457" height="125.2" rx="13"/>
<rect x="337" y="576.3" width="392" height="23.1" rx="8"/>
<rect x="733.7" y="339" width="63.6" height="57.4" rx="5"/>
<rect x="767.9" y="402.7" width="29.8" height="23" rx="4"/>
<rect x="405.6" y="272.3" width="80.2" height="28.7" rx="4.5"/>
</g>
<g stroke="#0e3295" stroke-width="1.9" stroke-linecap="round" stroke-dasharray="5.6 6.3" stroke-dashoffset="-.95">
<rect x="274" y="328" width="62" height="163.9" rx="3.5"/>
<rect x="342" y="328.1" width="385" height="101.8" rx="10"/>
<rect x="342" y="433.8" width="457" height="125.2" rx="13"/>
<rect x="337" y="576.3" width="392" height="23.1" rx="8"/>
<rect x="733.7" y="339" width="63.6" height="57.4" rx="5"/>
<rect x="767.9" y="402.7" width="29.8" height="23" rx="4"/>
<rect x="405.6" y="272.3" width="80.2" height="28.7" rx="4.5"/>
</g>
</g>
</svg>

<svg class="a" style="left:100px;top:683px" width="62" height="44" viewBox="0 0 62 44">
<rect x="2" y="1.9" width="41.3" height="46" rx="5.5" fill="#2b3a87"/>
<g transform="translate(11.3 11.5) rotate(45)" fill="none" stroke="#fff" stroke-width="1.15" stroke-linejoin="round" stroke-linecap="round">
<path d="M5.6 -5.6 H2.4 Q0 -5.6 0 -3.2 V3.2 Q0 5.6 2.4 5.6 H5.6"/>
<path d="M5.6 -5.6 V5.6"/>
<path d="M5.6 -5.6 H26.5 L38.8 0 L26.5 5.6 H5.6"/>
<path d="M26.5 -5.6 V5.6"/>
<path d="M5.6 -1.9 H26.5 M5.6 1.9 H26.5"/>
<path d="M34.2 -2 L38.8 0 L34.2 2Z" fill="#fff"/>
</g>
<g fill="#2446a6"><circle cx="54" cy="11.2" r="2"/><circle cx="54" cy="19" r="2"/><circle cx="54" cy="27" r="2"/><circle cx="54" cy="34.7" r="2"/></g>
</svg>

</div></body></html>
